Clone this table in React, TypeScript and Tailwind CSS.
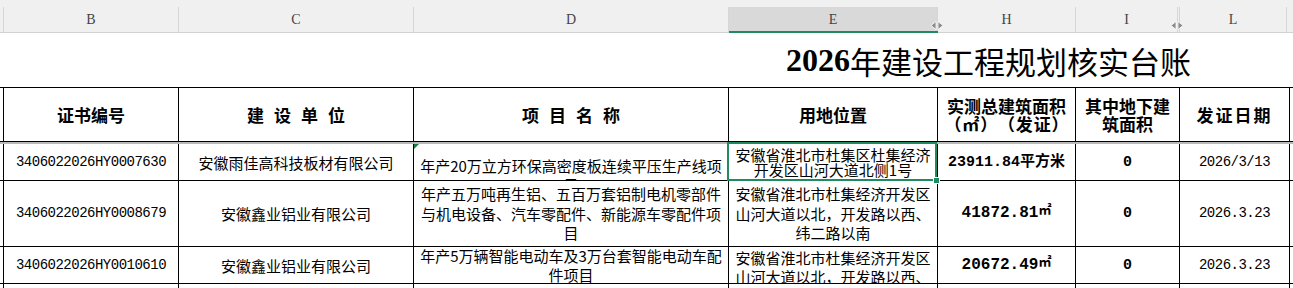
import React from "react";

const cjk = "font-['Noto_Sans_CJK_SC',sans-serif]";
const mono = "font-['Liberation_Mono','Noto_Sans_CJK_SC',monospace]";

type Props = { className?: string; children?: React.ReactNode };

const Cell = ({ className = "", children }: Props) => (
  <div
    className={`relative flex shrink-0 flex-col items-center justify-center overflow-hidden border-r border-black text-center ${className}`}
  >
    {children}
  </div>
);

const Row = ({ className = "", children }: Props) => (
  <div className={`flex border-b border-black ${className}`}>
    <div className="w-[4px] shrink-0 border-r border-black" />
    {children}
  </div>
);

const ColHead = ({ className = "", children }: Props) => (
  <div
    className={`relative flex h-[25px] shrink-0 items-center justify-center border-r border-[#d6d6d6] font-['Liberation_Serif',serif] text-[14px] text-[#444] ${className}`}
  >
    {children}
  </div>
);

const ResizeArrows = () => (
  <svg width="14" height="9" viewBox="0 0 14 9" className="absolute -right-[7px] top-[14px] z-10">
    <path d="M1 4.5 L6 0.5 L6 8.5 Z" fill="#8c8c8c" stroke="#fff" strokeWidth="0.8" />
    <path d="M13 4.5 L8 0.5 L8 8.5 Z" fill="#8c8c8c" stroke="#fff" strokeWidth="0.8" />
  </svg>
);

const Spaced = ({ text }: { text: string }) => (
  <div className="flex gap-[10px]">
    {text.split("").map((c, i) => (
      <span key={i}>{c}</span>
    ))}
  </div>
);

export default function App() {
  return (
    <div className="h-[288px] w-[1293px] overflow-hidden bg-white text-black">
      {/* column letters */}
      <div className="flex h-[33px] items-end border-b border-[#d2d2d2] bg-[#f0f0f0]">
        <div className="h-[25px] w-[4px] shrink-0 border-r border-[#d6d6d6]" />
        <ColHead className="w-[175px]">B</ColHead>
        <ColHead className="w-[235px]">C</ColHead>
        <ColHead className="w-[315px]">D</ColHead>
        <ColHead className="w-[209px] bg-[#d9d9d9] text-[#1f8b5f]">
          E
          <div className="absolute -bottom-[1px] left-0 right-[-1px] h-[2px] bg-[#1f8b5f]" />
          <ResizeArrows />
        </ColHead>
        <ColHead className="w-[138px]">H</ColHead>
        <ColHead className="w-[104px] border-r-[3px] border-double">
          I
          <ResizeArrows />
        </ColHead>
        <ColHead className="w-[107px]">L</ColHead>
        <div className="h-[25px] flex-1" />
      </div>

      {/* title */}
      <div className="flex h-[54px] items-center pl-[786px] text-[31px] leading-none">
        <span className="font-['Liberation_Serif',serif] text-[32px] font-bold">2026</span>
        <span className={cjk}>年建设工程规划核实台账</span>
      </div>

      {/* table */}
      <div className={`border-t border-black ${cjk}`}>
        <Row className="h-[54px] text-[17px] font-bold leading-[18px]">
          <Cell className="w-[175px]">证书编号</Cell>
          <Cell className="w-[235px]">
            <Spaced text="建设单位" />
          </Cell>
          <Cell className="w-[315px]">
            <Spaced text="项目名称" />
          </Cell>
          <Cell className="w-[209px]">用地位置</Cell>
          <Cell className="w-[138px]">
            <span>实测总建筑面积</span>
            <div className="flex w-[124px] justify-between">
              {"（㎡）（发证）".split("").map((c, i) => (
                <span key={i}>{c}</span>
              ))}
            </div>
          </Cell>
          <Cell className="w-[104px]">
            <span>其中地下建</span>
            <span>筑面积</span>
          </Cell>
          <Cell className="w-[110px] tracking-[2px]">发证日期</Cell>
          <div className="flex-1" />
        </Row>
        <div className="h-[2px] bg-[#b9b9b9]" />

        <Row className="h-[37px] text-[15px] leading-[19px]">
          <Cell className={`w-[175px] text-[14px] tracking-[-0.5px] ${mono}`}>3406022026HY0007630</Cell>
          <Cell className="w-[235px]">安徽雨佳高科技板材有限公司</Cell>
          <Cell className="w-[315px] justify-start! px-[4px] pt-[12px]">
            <div className="absolute left-0 top-0 h-0 w-0 border-r-[5px] border-t-[5px] border-r-transparent border-t-[#1e7b45]" />
            <span>年产20万立方环保高密度板连续平压生产线项目</span>
          </Cell>
          <Cell className="w-[209px] overflow-visible! leading-[15px]">
            <span>安徽省淮北市杜集区杜集经济</span>
            <span>开发区山河大道北侧1号</span>
            <div className="absolute -left-[2px] -top-[2px] -bottom-[1px] right-0 z-10 border-2 border-[#1f8b5f]" />
            <div className="absolute -bottom-[4px] -right-[3px] z-20 h-[7px] w-[7px] border border-white bg-[#1f8b5f]" />
          </Cell>
          <Cell className={`w-[138px] text-[15px] font-bold ${mono}`}>23911.84平方米</Cell>
          <Cell className={`w-[104px] text-[15px] font-bold ${mono}`}>0</Cell>
          <Cell className={`w-[110px] text-[14px] tracking-[-0.5px] ${mono}`}>2026/3/13</Cell>
          <div className="flex-1" />
        </Row>

        <Row className="h-[66px] text-[15px] leading-[19.5px]">
          <Cell className={`w-[175px] text-[14px] tracking-[-0.5px] ${mono}`}>3406022026HY0008679</Cell>
          <Cell className="w-[235px]">安徽鑫业铝业有限公司</Cell>
          <Cell className="w-[315px] px-[4px]">
            <span>年产五万吨再生铝、五百万套铝制电机零部件与机电设备、汽车零配件、新能源车零配件项目</span>
          </Cell>
          <Cell className="w-[209px] px-[3px]">
            <span>安徽省淮北市杜集经济开发区山河大道以北，开发路以西、纬二路以南</span>
          </Cell>
          <Cell className={`w-[138px] text-[16px] font-bold ${mono}`}>
            <span>
              41872.81<span className="relative -top-[3px] text-[13px]">㎡</span>
            </span>
          </Cell>
          <Cell className={`w-[104px] text-[15px] font-bold ${mono}`}>0</Cell>
          <Cell className={`w-[110px] text-[14px] tracking-[-0.5px] ${mono}`}>2026.3.23</Cell>
          <div className="flex-1" />
        </Row>

        <Row className="h-[37px] text-[15px] leading-[19px]">
          <Cell className={`w-[175px] text-[14px] tracking-[-0.5px] ${mono}`}>3406022026HY0010610</Cell>
          <Cell className="w-[235px]">安徽鑫业铝业有限公司</Cell>
          <Cell className="w-[315px] px-[4px]">
            <span>年产5万辆智能电动车及3万台套智能电动车配件项目</span>
          </Cell>
          <Cell className="w-[209px] justify-start! px-[3px] pt-[1px]">
            <span>安徽省淮北市杜集经济开发区山河大道以北，开发路以西、纬二路以南</span>
          </Cell>
          <Cell className={`w-[138px] text-[16px] font-bold ${mono}`}>
            <span>
              20672.49<span className="relative -top-[3px] text-[13px]">㎡</span>
            </span>
          </Cell>
          <Cell className={`w-[104px] text-[15px] font-bold ${mono}`}>0</Cell>
          <Cell className={`w-[110px] text-[14px] tracking-[-0.5px] ${mono}`}>2026.3.23</Cell>
          <div className="flex-1" />
        </Row>

        <Row className="h-[12px]">
          <Cell className="w-[175px]" />
          <Cell className="w-[235px]" />
          <Cell className="w-[315px]" />
          <Cell className="w-[209px]" />
          <Cell className="w-[138px]" />
          <Cell className="w-[104px]" />
          <Cell className="w-[110px]" />
          <div className="flex-1" />
        </Row>
      </div>
    </div>
  );
}
